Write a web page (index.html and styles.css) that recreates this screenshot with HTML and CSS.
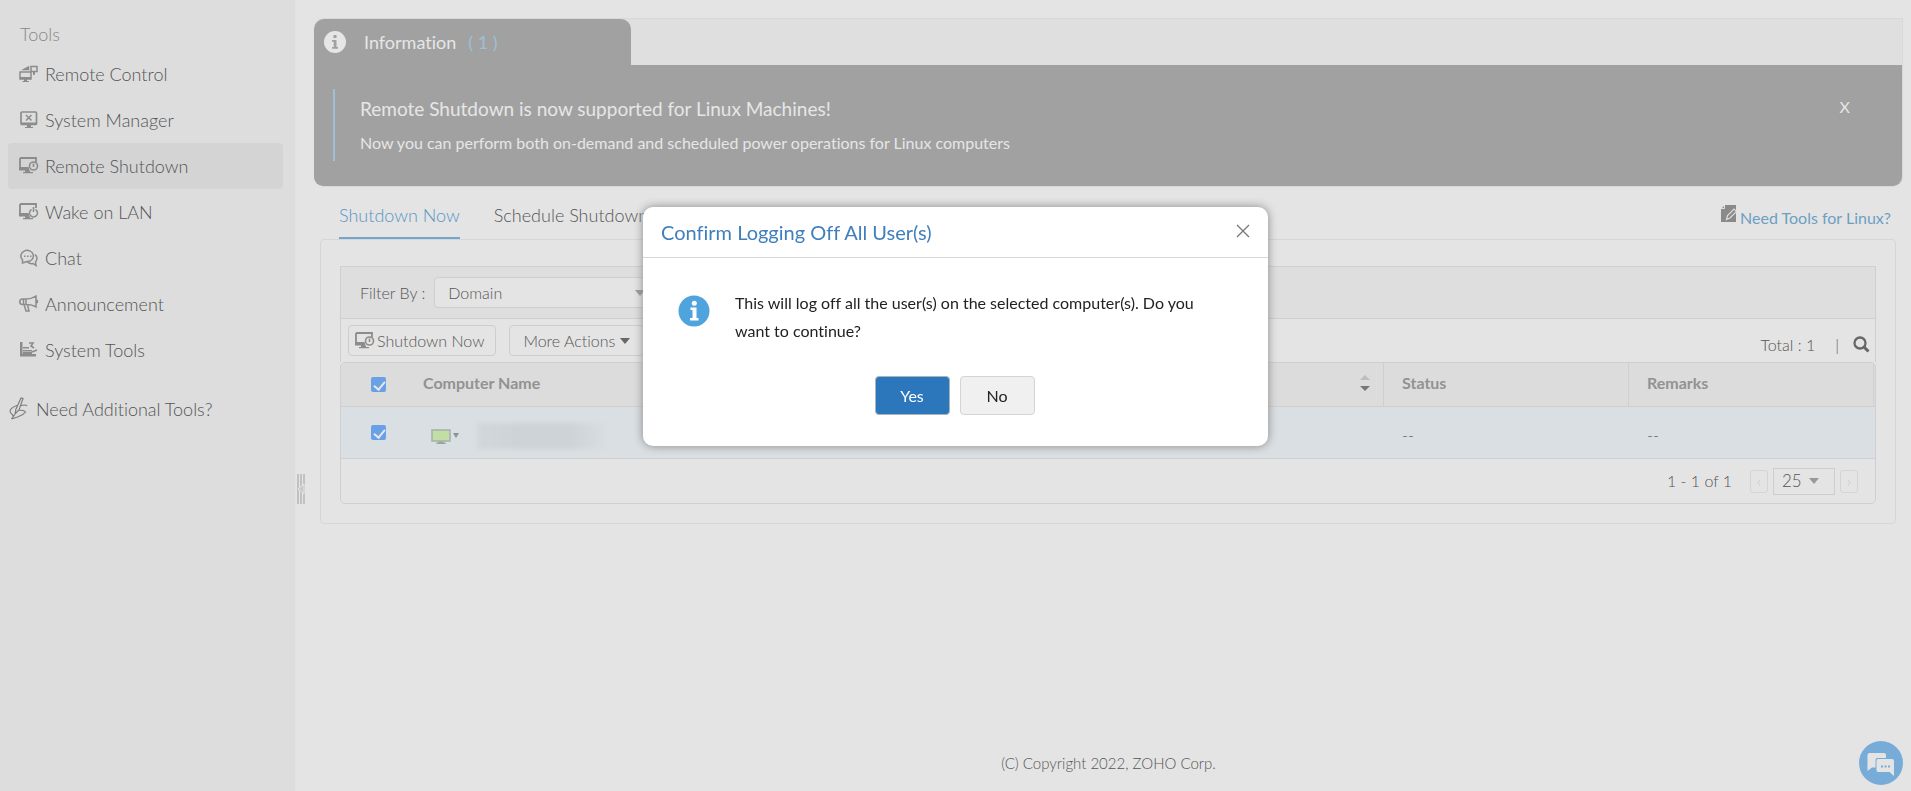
FILE: index.html
```html
<!DOCTYPE html>
<html lang="en">
<head>
<meta charset="utf-8">
<title>Remote Shutdown</title>
<link rel="stylesheet" href="styles.css">
</head>
<body>
<svg class="defs" aria-hidden="true">
  <symbol id="shutdown" viewBox="0 0 20 18">
    <path d="M1 1h16v4M1 1v11h9" fill="none" stroke="currentColor" stroke-width="1.800"/>
    <path d="M0 10h9.500l1 3.500H0zM6 13.500h5v1.500h3v1.300H4V15h2z" fill="currentColor"/>
    <circle cx="14.500" cy="9" r="4" fill="none" stroke="currentColor" stroke-width="1.600"/>
    <path d="M14.500 6.500V10" stroke="currentColor" stroke-width="1.600"/>
  </symbol>
</svg>
<div class="app">
  <nav class="sidebar" aria-label="Tools">
    <h2 class="sidebar-title">Tools</h2>
    <ul class="menu">
      <li><a class="menu-link" href="#control"><svg class="icon" viewBox="0 0 20 18"><g fill="none" stroke="currentColor" stroke-width="1.500"><path d="M1 7h11v7H1zM12 1.500h6v5h-6zM14 9h2"/><path d="M5 4.500 9.500 2v2.500z" fill="currentColor"/></g><path d="M1 12h11v2H1zM5 14h3v2h2v1H3.500v-1H5zM14 7h2v2h-2z" fill="currentColor"/></svg>Remote Control</a></li>
      <li><a class="menu-link" href="#manager"><svg class="icon" viewBox="0 0 20 18"><rect x="2" y="1" width="15.500" height="12.500" rx="1" fill="none" stroke="currentColor" stroke-width="1.700"/><path d="M2 11.500h15.500V14H2zM8 14h4v2h2v1H6v-1h2z" fill="currentColor"/><path d="m7 4 5.500 5.500M12.500 4 7 9.500" stroke="currentColor" stroke-width="1.500"/></svg>System Manager</a></li>
      <li><a class="menu-link active" href="#shutdown-page" aria-current="page"><svg class="icon"><use href="#shutdown"/></svg>Remote Shutdown</a></li>
      <li><a class="menu-link" href="#wake"><svg class="icon" viewBox="0 0 20 18"><path d="M1 1h16v4M1 1v11h9" fill="none" stroke="currentColor" stroke-width="1.800"/><path d="M0 10h9.500l1 3.500H0zM6 13.500h5v1.500h3v1.300H4V15h2z" fill="currentColor"/><path d="M12.500 6.500a4 4 0 1 0 4 0M14.500 4v5" fill="none" stroke="currentColor" stroke-width="1.500"/></svg>Wake on LAN</a></li>
      <li><a class="menu-link" href="#chat"><svg class="icon" viewBox="0 0 20 18"><g fill="none" stroke="currentColor" stroke-width="1.500"><path d="M3.500 10.800A6.300 5.600 0 1 1 8 12.600L3.500 14z"/><path d="M16 5.500c2.500 2 2.500 5 .5 7.500l.5 3.500-3-2c-2.200.4-4 0-5.500-1.800"/></g><path d="M5 6.500h1.500V8H5zM8 6.500h1.500V8H8zM11 6.500h1.500V8H11z" fill="currentColor"/></svg>Chat</a></li>
      <li><a class="menu-link" href="#announcement"><svg class="icon" viewBox="0 0 20 18"><g fill="none" stroke="currentColor" stroke-width="1.500"><path d="M7 4c4 0 7-1 10-3v11c-3-2-6-2.500-10-2.500zM7 4H3.500a2.700 2.700 0 0 0 0 5.500H7M5 9.500 7 16h3L8.500 10M17 5c2 0 2 3 0 3M4.500 4v5.500"/></g></svg>Announcement</a></li>
      <li><a class="menu-link" href="#system-tools"><svg class="icon" viewBox="0 0 20 18"><path d="M1 1h2.500v12H17v2.500H1zM4 6h6v1.500H4zM4 9h9v1.500H4zM4 11h9v2H4z" fill="currentColor"/><path d="m10 2 4 0-2 3 3 2M13 11l5-2" fill="none" stroke="currentColor" stroke-width="1.600"/></svg>System Tools</a></li>
    </ul>
    <a class="need-link" href="#more"><svg class="pen-icon" viewBox="0 0 20 24"><g fill="none" stroke="currentColor" stroke-width="1.200"><path d="M12 1 7 12l-1 5 4-4 4-11.500zM6.500 16.500 2.500 22M8 8.500C3 10 0 13 1.500 15.500S5 18 4 20M11 9c3-1 6-1.500 7 0M10 13c3 0 5 0 6.500 2-2 3-6 4-8 5l-6 2"/></g></svg>Need Additional Tools?</a>
  </nav>
  <button class="splitter" type="button" aria-label="Collapse sidebar"><svg width="8" height="30" viewBox="0 0 8 30"><path d="M1 0v30M4 0v30M7 0v30" stroke="#c1c1c1" stroke-width="2"/><path d="M7 10 1 15l6 5z" fill="#c8c8c8" stroke="#e6e6e6"/></svg></button>
  <main class="main">
    <section class="banner">
      <div class="banner-tab"><svg width="22" height="22" viewBox="0 0 22 22"><circle cx="11" cy="11" r="11" fill="#e6e6e6"/><path d="M9.500 4h3v3h-3zM8 9h4.500v7H14v1.700H8V16h1.700v-5.300H8z" fill="#a1a1a1"/></svg><span class="banner-name">Information</span><span class="banner-count">( 1 )</span></div>
      <div class="banner-body">
        <div class="notice">
          <h3 class="notice-title">Remote Shutdown is now supported for Linux Machines!</h3>
          <p class="notice-text">Now you can perform both on-demand and scheduled power operations for Linux computers</p>
        </div>
        <button class="banner-close" type="button" aria-label="Dismiss">X</button>
      </div>
    </section>
    <div class="tabs">
      <a class="tab selected" href="#now">Shutdown Now</a>
      <a class="tab" href="#schedule">Schedule Shutdown</a>
      <a class="linux-link" href="#linux"><svg width="16" height="18" viewBox="0 0 16 18"><path d="M4 0h11v17H0V4z" fill="#8a8a8a"/><path d="M0 3.500h3.500V0" fill="none" stroke="#e4e4e4"/><path d="m5.500 14.500 1-4L13 4l2.500 2.500L9 13z" fill="#8a8a8a" stroke="#dedede" stroke-width="1.200"/></svg>Need Tools for Linux?</a>
    </div>
    <section class="panel">
      <div class="filter">
        <label for="filter">Filter By :</label>
        <div class="filter-box"><select id="filter"><option>Domain</option></select><svg class="caret" width="10" height="6" viewBox="0 0 10 6"><path d="M0 0h10L5 6z" fill="#999"/></svg></div>
      </div>
      <div class="toolbar">
        <button class="action now" type="button"><svg class="icon"><use href="#shutdown"/></svg>Shutdown Now</button>
        <button class="action" type="button">More Actions<svg width="10" height="6" viewBox="0 0 10 6"><path d="M0 0h10L5 6z" fill="#666"/></svg></button>
        <span class="total">Total : 1</span><span class="divider">|</span>
        <button class="search" type="button" aria-label="Search"><svg width="17" height="17" viewBox="0 0 17 17"><circle cx="7" cy="7" r="5.500" fill="none" stroke="#666" stroke-width="2.300"/><path d="m11 11 4.500 4.500" stroke="#666" stroke-width="3"/></svg></button>
      </div>
      <div class="grid">
        <table>
          <colgroup><col class="c-check"><col><col class="c-info"><col class="c-info"><col class="c-end"></colgroup>
          <thead><tr>
            <th class="check"><input type="checkbox" checked aria-label="Select all computers"></th>
            <th><div class="name-head">Computer Name<button class="sort" type="button" aria-label="Sort"><svg width="10" height="16" viewBox="0 0 10 16"><path d="M0 5h10L5 0z" fill="#bdbdbd"/><path d="M0 11h10l-5 5z" fill="#777"/></svg></button></div></th>
            <th>Status</th><th>Remarks</th><th></th>
          </tr></thead>
          <tbody><tr>
            <td class="check"><input type="checkbox" checked aria-label="Select computer"></td>
            <td class="computer"><div class="computer-cell"><svg width="29" height="15" viewBox="0 0 29 15"><rect x="1" y="1" width="18" height="11" fill="#c1dfa5" stroke="#a9b2ad" stroke-width="1.600"/><path d="M7.500 12.500h5v1h2V15h-9v-1.500h2z" fill="#9ba39f"/><path d="M22 4h6l-3 5z" fill="#8c9494"/></svg><span class="redacted"></span></div></td>
            <td>--</td><td colspan="2">--</td>
          </tr></tbody>
        </table>
        <div class="pager">
          <span class="range">1 - 1 of 1</span>
          <button class="step" type="button" disabled>‹</button>
          <div class="size-box"><select aria-label="Rows per page"><option>25</option></select><svg class="caret" width="10" height="6" viewBox="0 0 10 6"><path d="M0 0h10L5 6z" fill="#999"/></svg></div>
          <button class="step" type="button" disabled>›</button>
        </div>
      </div>
    </section>
    <footer class="copyright">(C) Copyright 2022, ZOHO Corp.</footer>
  </main>
</div>
<button class="chat-button" type="button" aria-label="Chat"><svg width="44" height="44" viewBox="0 0 44 44"><path d="M10 12h15q2 0 2 2v3H18.500q-2 0-2 2v7.500H13L8.500 30V13.500z" fill="#e4e4e4"/><path d="M19 18h14q2 0 2 2v15l-4.500-4H19q-1.500 0-1.500-2v-9q0-2 1.500-2z" fill="#e4e4e4"/><path d="M22 24.500h2v2h-2zM25.500 24.500h2v2h-2zM29 24.500h2v2h-2z" fill="#78acd8"/></svg></button>
<div class="dialog" role="dialog" aria-modal="true" aria-labelledby="dialog-title">
  <header class="dialog-head">
    <h1 id="dialog-title">Confirm Logging Off All User(s)</h1>
    <button class="dialog-close" type="button" aria-label="Close"><svg width="14" height="14" viewBox="0 0 14 14"><path d="m1 1 12 12M13 1 1 13" stroke="#777" stroke-width="1.300"/></svg></button>
  </header>
  <div class="dialog-body">
    <svg class="info" width="32" height="32" viewBox="0 0 32 32"><circle cx="16" cy="16" r="15.500" fill="#50a4de"/><circle cx="16.300" cy="8.300" r="2.500" fill="#fff"/><path d="M12.500 12.500H18.500V23H20.500V25.500H12V23H14.500V15H12.500z" fill="#fff"/></svg>
    <p>This will log off all the user(s) on the selected computer(s). Do you want to continue?</p>
  </div>
  <div class="dialog-actions"><button class="yes" type="button">Yes</button><button class="no" type="button">No</button></div>
</div>
</body>
</html>
```
FILE: styles.css
```css
* { box-sizing: border-box; }
body { margin: 0; background: #e4e4e4; color: #555; font-family: Lato, "Liberation Sans", sans-serif; font-size: 16px; line-height: 20px; font-variant-ligatures: none; }
h1, h2, h3, p, ul { margin: 0; padding: 0; }
h1, h2, h3 { font-weight: 400; }
ul { list-style: none; }
a { color: inherit; text-decoration: none; }
button, select, input { font: inherit; font-variant-ligatures: none; color: inherit; margin: 0; }
button { display: flex; align-items: center; justify-content: center; padding: 0; border: 0; background: none; cursor: pointer; }
svg { flex: none; }
.defs { position: absolute; width: 0; height: 0; }
.app { display: flex; min-height: 100vh; }

.sidebar { width: 295px; flex: none; padding: 22px 12px 0 8px; background: #ddd; font-size: 18px; font-weight: 300; line-height: 24px; }
.sidebar-title { padding-left: 12px; margin-bottom: 5px; color: #888; font-size: 18px; font-weight: 300; line-height: 24px; }
.menu-link { display: flex; align-items: center; gap: 6px; height: 46px; padding-left: 11px; border-radius: 4px; }
.menu-link.active { background: #d4d4d4; }
.icon { width: 20px; height: 18px; color: #8c8c8c; }
.need-link { display: flex; align-items: center; gap: 7px; margin-top: 24px; padding-left: 1px; }
.pen-icon { width: 20px; height: 24px; color: #7d7d7d; }
.splitter { align-self: flex-start; width: 9px; margin-top: 474px; padding-left: 2px; }

.main { flex: 1; min-width: 0; display: flex; flex-direction: column; padding: 18px 8px 17px 10px; }
.banner { border: 1px solid #d8d8d8; border-left: 0; border-radius: 10px 0 10px 10px; background: #dfdfdf; }
.banner-tab { display: flex; align-items: center; width: 317px; height: 46px; padding-left: 10px; border-radius: 10px 10px 0 0; background: #a1a1a1; color: #e6e6e6; font-size: 18px; }
.banner-name { margin-left: 18px; }
.banner-count { margin-left: 12px; color: #9dc0d4; }
.banner-body { display: flex; align-items: flex-start; justify-content: space-between; padding: 24px 52px 25px 19px; border-radius: 0 0 9px 9px; background: #a1a1a1; color: #e6e6e6; }
.notice { height: 72px; padding: 8px 0 0 25px; border-left: 2px solid #9dc0d4; }
.notice-title { font-size: 19px; line-height: 24px; }
.notice-text { margin-top: 12px; line-height: 20px; }
.banner-close { margin-top: 8px; }

.tabs { display: flex; gap: 34px; padding: 14px 12px 0 25px; font-size: 18px; font-weight: 300; }
.tab { height: 38px; line-height: 28px; }
.selected { color: #5796c6; border-bottom: 2px solid #72a6cc; }
.linux-link { display: flex; gap: 3px; margin-left: auto; padding-top: 4px; color: #6d9fc2; font-size: 16px; font-weight: 400; line-height: 26px; }

.panel { margin: 0 7px 0 6px; padding: 26px 19px 19px; border: 1px solid #d6d6d6; border-radius: 4px; font-weight: 300; }
.filter, .toolbar { display: flex; align-items: center; border: 1px solid #cfcfcf; border-bottom: 0; }
.filter { gap: 9px; height: 52px; padding: 0 19px; background: #dedede; }
.filter-box, .size-box { position: relative; }
.caret { position: absolute; top: 50%; right: 10px; margin-top: -3px; pointer-events: none; }
select { appearance: none; border: 1px solid #cdcdcd; background: #e4e4e4; }
.filter select { width: 221px; height: 31px; padding: 0 13px; border-radius: 4px; }
.toolbar { height: 44px; padding: 0 5px 0 7px; }
.action { gap: 5px; height: 31px; margin-right: 13px; padding: 0 13px; border: 1px solid #cdcdcd; border-radius: 4px; }
.action.now { gap: 2px; padding: 0 11px 0 6px; }
.total { margin: 8px 20px 0 auto; }
.divider { margin: 8px 14px 0 0; }
.search { margin-top: 8px; }

.grid { border: 1px solid #cfcfcf; border-radius: 5px; overflow: hidden; }
table { width: 100%; table-layout: fixed; border-collapse: separate; border-spacing: 0; text-align: left; }
.c-check { width: 67px; }
.c-info { width: 245px; }
.c-end { width: 1px; }
th { height: 44px; padding: 0 0 4px 18px; border-right: 1px solid #cfcfcf; border-bottom: 1px solid #cfcfcf; background: #dcdcdc; color: #929292; font-weight: 700; }
th:first-child, th:last-child { border-right: 0; }
th:last-child { padding: 0; }
th:nth-child(2), .computer { padding-left: 15px; }
.name-head { display: flex; align-items: center; justify-content: space-between; padding-right: 13px; }
td { height: 52px; padding: 4px 0 0 18px; border-bottom: 1px solid #cfcfcf; background: #dadfe3; }
th.check, td.check { padding: 0 0 1px 30px; }
.check input { display: block; width: 15px; height: 15px; appearance: none; border-radius: 2px; background: #6aa1e6; position: relative; }
.check input:checked::after { content: ""; position: absolute; left: 5px; top: 2px; width: 5px; height: 9px; border: solid #e8e8e8; border-width: 0 2px 2px 0; transform: rotate(40deg); }
.computer-cell { display: flex; align-items: center; gap: 17px; padding: 3px 0 0 8px; }
.redacted { width: 134px; height: 26px; background: linear-gradient(90deg, #d2d7db, #cdd3d7 30%, #cdd3d7 70%, #dadfe3); filter: blur(2px); }
.pager { display: flex; align-items: center; height: 44px; padding-right: 17px; justify-content: flex-end; }
.range { margin-right: 18px; }
.step { width: 18px; height: 23px; border: 1px solid #d4d4d4; border-radius: 3px; color: #c4c4c4; }
.size-box { margin: 0 5px; }
.size-box select { display: block; width: 62px; height: 27px; padding: 0 8px; font-size: 17px; line-height: 24px; }
.size-box .caret { right: 16px; }
.copyright { margin-top: auto; text-align: center; font-size: 15px; font-weight: 300; line-height: 22px; }
.chat-button { position: fixed; right: 8px; bottom: 6px; width: 44px; height: 44px; border-radius: 50%; background: #78acd8; }

.dialog { position: fixed; top: 207px; left: 0; right: 0; width: 625px; max-width: 95vw; margin: 0 auto; padding-bottom: 31px; border-radius: 10px; background: #fff; box-shadow: 0 0 10px #888; color: #222; }
.dialog-head { display: flex; align-items: center; justify-content: space-between; height: 51px; padding: 0 18px; border-bottom: 1px solid #d8d8d8; }
.dialog-head h1 { color: #3f7fbd; font-size: 20px; line-height: 24px; }
.dialog-close { margin-bottom: 2px; }
.dialog-body { display: flex; gap: 25px; padding: 31px 60px 0 35px; }
.dialog-body p { line-height: 28px; }
.info { margin-top: 6px; }
.dialog-actions { display: flex; justify-content: center; gap: 10px; margin-top: 31px; padding-right: 2px; }
.yes, .no { width: 75px; height: 39px; border: 1px solid #d4d4d4; border-radius: 4px; background: #f0f0f0; }
.yes { background: #2c76bb; color: #fff; border-color: #a9b4bd; }
```
